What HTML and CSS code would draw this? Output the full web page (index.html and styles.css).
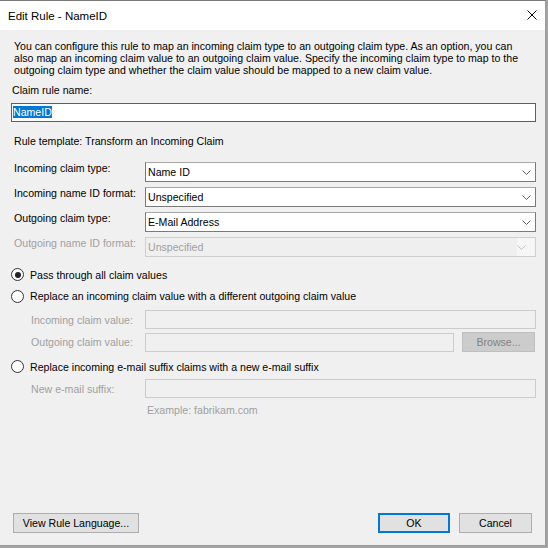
FILE: index.html
```html
<!DOCTYPE html>
<html>
<head>
<meta charset="utf-8">
<link rel="stylesheet" href="styles.css">
</head>
<body>
<div class="window">
  <div class="titlebar">
    <span class="title">Edit Rule - NameID</span>
    <svg class="close" width="10" height="10" viewBox="0 0 10 10"><path d="M0.5 0.5 L9.5 9.5 M9.5 0.5 L0.5 9.5" stroke="#000" stroke-width="1" fill="none"/></svg>
  </div>
  <div class="content">
    <p class="desc">You can configure this rule to map an incoming claim type to an outgoing claim type. As an option, you can<br>also map an incoming claim value to an outgoing claim value. Specify the incoming claim type to map to the<br>outgoing claim type and whether the claim value should be mapped to a new claim value.</p>
    <div class="name-lbl">Claim rule name:</div>
    <div class="namebox"><span class="sel">NameID</span></div>
    <div class="template">Rule template: Transform an Incoming Claim</div>
    <div class="fields">
      <div class="field">
        <span class="flabel">Incoming claim type:</span>
        <div class="combo"><span>Name ID</span><svg class="chev" width="9" height="5" viewBox="0 0 9 5"><path d="M0.5 0.5 L4.5 4.5 L8.5 0.5" stroke="#606060" fill="none"/></svg></div>
      </div>
      <div class="field">
        <span class="flabel">Incoming name ID format:</span>
        <div class="combo"><span>Unspecified</span><svg class="chev" width="9" height="5" viewBox="0 0 9 5"><path d="M0.5 0.5 L4.5 4.5 L8.5 0.5" stroke="#606060" fill="none"/></svg></div>
      </div>
      <div class="field">
        <span class="flabel">Outgoing claim type:</span>
        <div class="combo"><span>E-Mail Address</span><svg class="chev" width="9" height="5" viewBox="0 0 9 5"><path d="M0.5 0.5 L4.5 4.5 L8.5 0.5" stroke="#606060" fill="none"/></svg></div>
      </div>
      <div class="field">
        <span class="flabel dis">Outgoing name ID format:</span>
        <div class="combo combo-dis"><span>Unspecified</span><span class="arrowbox"><svg class="chev" width="9" height="5" viewBox="0 0 9 5"><path d="M0.5 0.5 L4.5 4.5 L8.5 0.5" stroke="#c4c4c4" fill="none"/></svg></span></div>
      </div>
    </div>
    <div class="radio-row r1"><span class="radio checked"></span><span>Pass through all claim values</span></div>
    <div class="radio-row r2"><span class="radio"></span><span>Replace an incoming claim value with a different outgoing claim value</span></div>
    <div class="sub s1"><span class="slabel dis">Incoming claim value:</span><div class="tbox tbox-wide"></div></div>
    <div class="sub s2"><span class="slabel dis">Outgoing claim value:</span><div class="tbox tbox-narrow"></div><div class="btn btn-dis browse">Browse...</div></div>
    <div class="radio-row r3"><span class="radio"></span><span>Replace incoming e-mail suffix claims with a new e-mail suffix</span></div>
    <div class="sub s3"><span class="slabel dis">New e-mail suffix:</span><div class="tbox tbox-wide"></div></div>
    <div class="example dis">Example: fabrikam.com</div>
  </div>
  <div class="footer">
    <div class="btn view">View Rule Language...</div>
    <div class="actions">
      <div class="btn ok">OK</div>
      <div class="btn cancel">Cancel</div>
    </div>
  </div>
</div>
</body>
</html>
```

FILE: styles.css
```css
body {
  margin: 0;
  background: #a4a4a4;
  font-family: "Liberation Sans", Arial, sans-serif;
  font-size: 10.6px;
  color: #000;
}

.window {
  width: 546px;
  height: 546px;
  box-sizing: border-box;
  background: #f0f0f0;
  border-top: 1px solid #7a7a7a;
  border-right: 1px solid #9a9a9a;
  border-bottom: 1px solid #9a9a9a;
  display: flex;
  flex-direction: column;
}

.titlebar {
  flex: none;
  height: 29px;
  background: #fff;
  display: flex;
  align-items: center;
  justify-content: space-between;
  padding: 0 8px 0 8px;
}

.title {
  font-size: 11.5px;
}

.close {
  display: block;
  margin-top: -1px;
}

.content {
  flex: 1;
}

.dis {
  color: #a0a0a0;
}

.desc {
  margin: 0;
  padding: 10px 0 0 14px;
  line-height: 12px;
  white-space: nowrap;
}

.name-lbl {
  margin: 7.5px 0 0 12px;
  line-height: 13px;
}

.namebox {
  margin: 6px 0 0 11px;
  width: 525px;
  height: 19px;
  box-sizing: border-box;
  border: 1px solid #0078d7;
  background: #fff;
  padding: 2px 1px;
}

.sel {
  display: inline-block;
  vertical-align: top;
  line-height: 12px;
  background: #0078d7;
  color: #fff;
}

.template {
  margin: 13.5px 0 0 14px;
  line-height: 13px;
}

.fields {
  margin-top: 14px;
  display: flex;
  flex-direction: column;
  gap: 5px;
}

.field {
  display: flex;
  align-items: flex-start;
  padding-left: 14px;
}

.flabel {
  width: 131px;
  line-height: 13px;
}

.combo {
  width: 391px;
  height: 20px;
  box-sizing: border-box;
  border: 1px solid #7a7a7a;
  border-top-color: #a8a8a8;
  background: #fff;
  display: flex;
  align-items: center;
  justify-content: space-between;
  padding: 0 4px 0 2px;
}

.chev {
  display: block;
}

.combo-dis {
  border-color: #cfcfcf;
  background: #efefef;
  color: #a0a0a0;
  padding-right: 0;
}

.arrowbox {
  width: 18px;
  height: 18px;
  background: #f6f6f6;
  display: flex;
  align-items: center;
  justify-content: flex-start;
}

.radio-row {
  display: flex;
  align-items: center;
  height: 16px;
  padding-left: 11px;
}

.r1 { margin-top: 9.5px; }
.r2 { margin-top: 5.7px; }
.r3 { margin-top: 6.3px; }

.radio {
  width: 13px;
  height: 13px;
  box-sizing: border-box;
  border: 1px solid #333;
  border-radius: 50%;
  background: #fff;
  margin-right: 6px;
  display: flex;
  align-items: center;
  justify-content: center;
  flex: none;
}

.radio.checked::after {
  content: "";
  width: 6px;
  height: 6px;
  border-radius: 50%;
  background: #222;
}

.sub {
  display: flex;
  align-items: center;
  padding-left: 31px;
}

.s1 { margin-top: 6px; }
.s2 { margin-top: 3.3px; height: 20px; }
.s3 { margin-top: 4.7px; }

.slabel {
  width: 114px;
}

.tbox {
  height: 19px;
  box-sizing: border-box;
  border: 1px solid #cccccc;
  background: #f0f0f0;
}

.tbox-wide { width: 391px; }
.tbox-narrow { width: 309px; }

.btn {
  height: 20px;
  box-sizing: border-box;
  border: 1px solid #adadad;
  background: #e1e1e1;
  display: flex;
  align-items: center;
  justify-content: center;
}

.btn-dis {
  background: #cccccc;
  border-color: #bfbfbf;
  color: #838383;
}

.browse {
  width: 73px;
  margin-left: 8px;
}

.example {
  margin: 5.7px 0 0 147px;
  line-height: 13px;
}

.footer {
  flex: none;
  display: flex;
  justify-content: space-between;
  padding: 0 13px 12px 13px;
}

.view { width: 126px; }

.actions {
  display: flex;
  gap: 9px;
}

.ok {
  width: 72px;
  border: 2px solid #0078d7;
}

.cancel { width: 73px; }
```
